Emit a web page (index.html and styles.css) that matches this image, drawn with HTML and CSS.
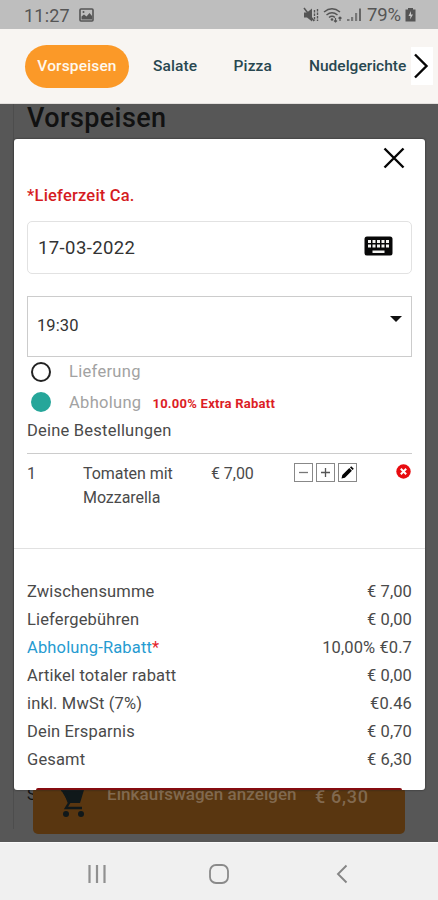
FILE: index.html
```html
<!DOCTYPE html>
<html lang="de">
<head>
<meta charset="utf-8">
<title>Warenkorb</title>
<link rel="stylesheet" href="styles.css">
</head>
<body>
<header class="status">
  <span class="clock">11:27</span>
  <svg class="picture" width="15" height="14" viewBox="0 0 15 14"><rect x="1" y="1" width="13" height="12" rx="1" fill="none" stroke="#555" stroke-width="1.6"/><path d="M2.500 11.500v-3L5 6.500l2.500 2 3-3.500 2.500 3v3.500z" fill="#555"/><circle cx="4.500" cy="4" r="1" fill="#555"/></svg>
  <div class="signals">
    <svg width="16" height="16" viewBox="0 0 16 16"><path d="M1 5.500h3l5-4v13l-5-4H1z" fill="#555"/><path d="M1 1l10 13" stroke="#555" stroke-width="1.500"/><path d="M11.500 3v11M14.500 2v12" fill="none" stroke="#555" stroke-width="1.400" stroke-dasharray="2.500 1"/></svg>
    <svg width="20" height="16" viewBox="0 0 20 16"><g fill="none" stroke="#555" stroke-width="1.500"><path d="M1 5q8-6.500 16 0M3.500 8q5.500-4.500 11 0M6 10.500q3-2.500 6 0"/><path d="M12.500 11v4M11 13.500l1.500 1.500 1.500-1.500M17 14v-4M15.500 11.500L17 10l1.500 1.500" stroke-width="1.200"/></g><circle cx="9" cy="12.500" r="1.300" fill="#555"/></svg>
    <svg width="15" height="16" viewBox="0 0 15 16"><path d="M0 12h2.500v2H0zM4 10h2.200v4H4zM8 6h2.200v8H8z" fill="#777"/><path d="M12 1.500h2V14h-2z" fill="#666"/></svg>
    <span class="percent">79%</span>
    <svg class="battery" width="11" height="14" viewBox="0 0 11 14"><path d="M3 0h5v1.500h2.500V13.500H.5V1.500H3z" fill="#555"/><path d="M6 3L3.500 8h2l-.5 3.500L8 6.500H6z" fill="#c8c8c8"/></svg>
  </div>
</header>
<nav class="tabs">
  <a class="tab active">Vorspeisen</a>
  <a class="tab salate">Salate</a>
  <a class="tab pizza">Pizza</a>
  <a class="tab nudel">Nudelgerichte</a>
  <span class="next"><svg width="22" height="38" viewBox="0 0 22 38"><path d="M4 7.500L15.500 19 4 30.500" fill="none" stroke="#050505" stroke-width="2.400"/></svg></span>
</nav>
<main class="page">
  <div class="card">
    <h1>Vorspeisen</h1>
    <span class="behind">S</span>
  </div>
  <div class="cart">
    <svg class="trolley" width="26" height="29" viewBox="0 0 26 29"><path d="M1 0h23l-4 13H9z" fill="#10181a"/><path d="M1 0h3l5 13-3 5h16" fill="none" stroke="#10181a" stroke-width="2.400"/><circle cx="6" cy="24" r="3" fill="#10181a"/><circle cx="21" cy="24" r="3" fill="#10181a"/></svg>
    <span class="cart-label">Einkaufswagen anzeigen</span>
    <span class="cart-sum">€ 6,30</span>
  </div>
  <section class="modal">
    <div class="close"><svg width="22" height="22" viewBox="0 0 22 22"><path d="M1.500 1.500l19 19M20.500 1.500l-19 19" stroke="#050505" stroke-width="2.400"/></svg></div>
    <div class="delivery">*Lieferzeit Ca.</div>
    <div class="field date"><span>17-03-2022</span>
      <svg width="29" height="20" viewBox="0 0 29 20"><rect x=".5" y=".5" width="28" height="19" rx="2.500" fill="#080808"/><path d="M4 4h3v3H4zm4.500 0h3v3h-3zm4.500 0h3v3h-3zm4.500 0h3v3h-3zM22 4h3v3h-3zM4 8.500h3v3H4zm4.500 0h3v3h-3zm4.500 0h3v3h-3zm4.500 0h3v3h-3zm4.500 0h3v3h-3zM8.500 14.500h12v2.500h-12z" fill="#f5f5f3"/></svg>
    </div>
    <div class="field time"><span>19:30</span><i class="caret"></i></div>
    <div class="option"><i class="radio"></i><span class="lief">Lieferung</span></div>
    <div class="option"><i class="radio on"></i><span class="abh">Abholung</span><b>10.00% Extra Rabatt</b></div>
    <div class="orders">Deine Bestellungen</div>
    <div class="item">
      <span>1</span>
      <span class="dish">Tomaten mit<br>Mozzarella</span>
      <span class="price">€ 7,00</span>
      <div class="tools">
        <svg width="19" height="19" viewBox="0 0 19 19"><rect x=".5" y=".5" width="18" height="18" fill="#fff" stroke="#888"/><path d="M5 9.500h9" stroke="#777" stroke-width="1.300"/></svg>
        <svg width="19" height="19" viewBox="0 0 19 19"><rect x=".5" y=".5" width="18" height="18" fill="#fff" stroke="#888"/><path d="M5 9.500h9M9.500 5v9" stroke="#555" stroke-width="1.300"/></svg>
        <svg width="19" height="19" viewBox="0 0 19 19"><rect x=".5" y=".5" width="18" height="18" fill="#fff" stroke="#888"/><path d="M3.500 15.500l.8-3.400 7-7 2.600 2.600-7 7zM12 4.400l1.200-1.200 2.600 2.600-1.200 1.200z" fill="#050505"/></svg>
      </div>
      <svg class="remove" width="15" height="15" viewBox="0 0 15 15"><circle cx="7.500" cy="7.500" r="7.200" fill="#e80c10"/><path d="M4.800 4.800l5.400 5.400M10.200 4.800l-5.400 5.400" stroke="#fff" stroke-width="2"/></svg>
    </div>
    <dl class="totals">
      <dt>Zwischensumme</dt><dd>€ 7,00</dd>
      <dt>Liefergebühren</dt><dd>€ 0,00</dd>
      <dt class="blue">Abholung-Rabatt<em>*</em></dt><dd>10,00% €0.7</dd>
      <dt>Artikel totaler rabatt</dt><dd>€ 0,00</dd>
      <dt>inkl. MwSt (7%)</dt><dd>€0.46</dd>
      <dt>Dein Ersparnis</dt><dd>€ 0,70</dd>
      <dt>Gesamt</dt><dd>€ 6,30</dd>
    </dl>
  </section>
  <i class="cart-edge"></i>
</main>
<footer class="system">
  <svg width="20" height="20" viewBox="0 0 20 20"><path d="M2.500 1v18M10 1v18M17.500 1v18" stroke="#909090" stroke-width="2.200"/></svg>
  <svg class="home" width="20" height="20" viewBox="0 0 20 20"><rect x="1" y="1" width="18" height="18" rx="6" fill="none" stroke="#8a8a8a" stroke-width="1.800"/></svg>
  <svg width="12" height="20" viewBox="0 0 12 20"><path d="M10.500 1.500L2 10l8.500 8.500" fill="none" stroke="#858585" stroke-width="1.900"/></svg>
</footer>
</body>
</html>
```
FILE: styles.css
```css
* { box-sizing: border-box; }
body { margin: 0; width: 438px; height: 900px; overflow: hidden; font-family: Roboto, sans-serif; font-size: 16.5px; color: #4a4a4a; background: #575757; }
svg { display: block; flex: none; }
.status { height: 29px; background: #bebebe; display: flex; align-items: center; padding: 1px 22px 0 24px; color: #555; }
.clock { font-size: 18px; letter-spacing: .2px; width: 55px; }
.signals { margin-left: auto; display: flex; align-items: center; gap: 4px; }
.percent { font-size: 18.5px; margin-left: 1px; letter-spacing: -.1px; }
.tabs { height: 75px; background: #f8f5f2; display: flex; align-items: center; position: relative; border-bottom: 1px solid #e3e0dd; font-size: 15.5px; font-weight: 500; color: #284750; padding-left: 25px; white-space: nowrap; }
.active { width: 104px; height: 43px; border-radius: 22px; background: #fb9928; color: #fff8ed; display: grid; place-items: center; letter-spacing: .15px; }
.salate { margin-left: 24px; width: 80.5px; letter-spacing: .1px; }
.pizza { width: 75.5px; letter-spacing: .15px; }
.nudel { letter-spacing: 0; }
.next { position: absolute; right: 5px; top: 18px; background: #fff; }
.page { height: 738px; position: relative; background: #575757; overflow: hidden; }
.card { margin-left: 13px; border-left: 1px solid #4d4d4d; height: 725px; padding-left: 13px; width: 412px; display: flex; flex-direction: column; justify-content: space-between; }
h1 { margin: 0; font-size: 27px; line-height: 28px; font-weight: 500; color: #111; letter-spacing: .4px; }
.behind { color: #111; font-size: 16px; margin-bottom: 25px; }
.cart { position: absolute; left: 33px; top: 683px; width: 372px; height: 47px; border-radius: 5px; background: #593610; display: flex; align-items: flex-start; color: #81694f; font-weight: 500; padding: 3px 0 0 27px; }
.cart-label { margin: -6px 0 0 21px; width: 208px; font-size: 17px; letter-spacing: .05px; white-space: nowrap; }
.cart-sum { font-size: 18px; margin-top: -4px; letter-spacing: .7px; }
.cart-edge { position: absolute; left: 36px; top: 684px; width: 366px; height: 2px; background: #860c10; border-radius: 2px 2px 0 0; }
.modal { position: absolute; left: 14px; top: 35px; width: 411px; height: 651px; background: #fff; border-radius: 3px; box-shadow: 0 0 2px #222; padding: 8px 13px 0 13px; }
.close { display: flex; justify-content: flex-end; height: 37px; padding-right: 7px; }
.delivery { color: #d51c22; font-weight: 500; line-height: 24px; letter-spacing: .2px; margin-bottom: 13px; }
.field { border: 1px solid #e2e2e2; display: flex; align-items: center; justify-content: space-between; color: #333; padding-left: 10px; }
.date { height: 53px; border-radius: 5px; font-size: 18.5px; letter-spacing: .4px; padding-right: 18px; }
.date svg { margin-top: -3px; }
.time { height: 61px; margin-top: 22px; border-color: #ccc; padding: 0 9px 2px 9px; letter-spacing: .1px; }
.caret { border: 6px solid transparent; border-top-color: #111; border-bottom: 0; margin-bottom: 14px; }
.option { height: 30.5px; display: flex; align-items: center; color: #a2a2a2; padding: 0 0 1px 4px; }
.radio { width: 20px; height: 20px; border: 2px solid #222; border-radius: 50%; margin-right: 18px; }
.on { background: #26a69a; border-color: #26a69a; }
.option span { letter-spacing: .3px; }
.option b { color: #dc1d25; font-size: 13px; margin-left: 11px; letter-spacing: .25px; padding-top: 2px; font-weight: 700; }
.orders { line-height: 25px; height: 36px; border-bottom: 1px solid #ccc; letter-spacing: .22px; }
.item { margin: 0 -13px; padding: 8px 14px 0 13px; height: 95px; border-bottom: 1px solid #e1e1e1; display: grid; grid-template-columns: 56px 128px 83px 1fr 15px; font-size: 16px; line-height: 24px; letter-spacing: -.05px; align-items: start; }
.tools { display: flex; gap: 3px; padding-top: 1px; }
.remove { margin-top: 2px; }
.totals { margin: 29px 0 0; display: grid; grid-template-columns: auto auto; grid-auto-rows: 28px; line-height: 28px; letter-spacing: .15px; }
dd { margin: 0; text-align: right; letter-spacing: .1px; }
.blue { color: #269bd1; }
em { color: #e32328; font-style: normal; }
.system { height: 58px; background: #f0f0f0; display: flex; align-items: center; justify-content: space-between; padding: 4px 90px 0 87px; border-top: 1px solid #fafafa; }
.home { margin-right: 5px; }
```
